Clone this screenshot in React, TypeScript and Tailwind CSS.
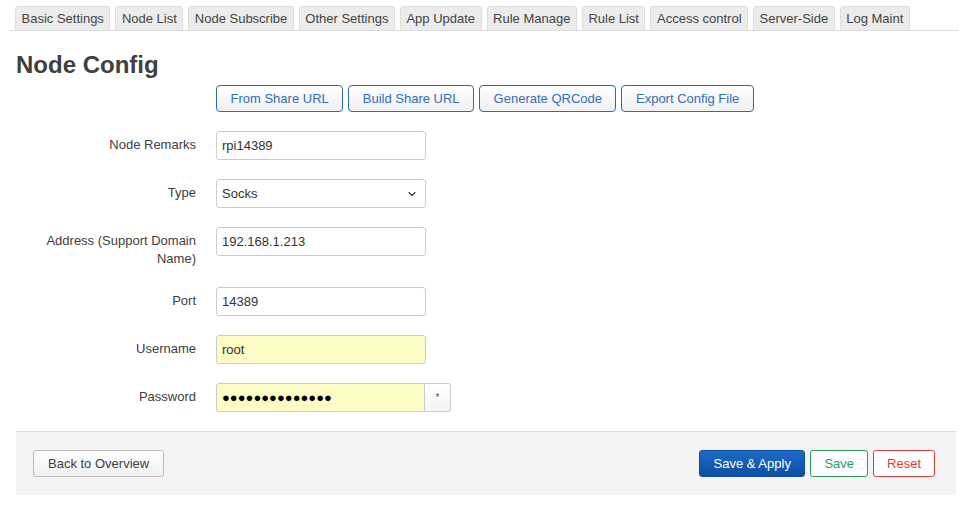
import { ChevronDown } from "lucide-react";

const TABS = [
  "Basic Settings",
  "Node List",
  "Node Subscribe",
  "Other Settings",
  "App Update",
  "Rule Manage",
  "Rule List",
  "Access control",
  "Server-Side",
  "Log Maint",
];

const ACTIONS = ["From Share URL", "Build Share URL", "Generate QRCode", "Export Config File"];

function Row({ label, children }: { label: React.ReactNode; children: React.ReactNode }) {
  return (
    <div className="mt-[19px] flex items-start">
      <div className="w-[180px] pt-[5px] text-right leading-[18px] text-[#404040]">{label}</div>
      <div className="ml-[20px]">{children}</div>
    </div>
  );
}

function TextInput({ value, yellow }: { value: string; yellow?: boolean }) {
  return (
    <div
      className={`flex h-[29px] w-[210px] items-center rounded-[3px] border border-[#ccc] px-[5px] text-[13px] text-[#333] ${
        yellow ? "bg-[#fdfbc6]" : "bg-white"
      }`}
    >
      {value}
    </div>
  );
}

export default function App() {
  return (
    <div
      className="min-h-[505px] bg-white text-[13px] text-[#404040]"
      style={{ fontFamily: '"Liberation Sans", Arial, sans-serif' }}
    >
      {/* tabs */}
      <div className="ml-[10px] flex gap-[5px] border-b border-[#ddd] pl-[5px] pt-[6px]">
        {TABS.map((t) => (
          <div
            key={t}
            className="-mb-px flex h-[25px] items-center rounded-t-[3px] border border-[#ddd] bg-[#ececec] px-[5.5px] text-[#444]"
          >
            {t}
          </div>
        ))}
      </div>

      <div className="pl-[16px] pr-[3px]">
        <h2 className="mt-[20px] text-[24px] leading-[28px] font-bold text-[#404040]">Node Config</h2>

        <div className="ml-[200px] mt-[6px] flex gap-[5px]">
          {ACTIONS.map((a) => (
            <button
              key={a}
              className="h-[27px] rounded-[4px] border border-[#2b6cb0] bg-gradient-to-b from-white to-[#f0f0f0] px-[13.5px] text-[13px] text-[#2f6fb4]"
            >
              {a}
            </button>
          ))}
        </div>

        <div>
          <Row label="Node Remarks">
            <TextInput value="rpi14389" />
          </Row>
          <Row label="Type">
            <div className="flex h-[29px] w-[210px] items-center justify-between rounded-[3px] border border-[#ccc] bg-white px-[5px] text-[13px] text-[#333]">
              <span>Socks</span>
              <ChevronDown size={12} strokeWidth={2.2} className="mr-[2px] text-[#333]" />
            </div>
          </Row>
          <Row label={<>Address (Support Domain<br />Name)</>}>
            <TextInput value="192.168.1.213" />
          </Row>
          <Row label="Port">
            <TextInput value="14389" />
          </Row>
          <Row label="Username">
            <TextInput value="root" yellow />
          </Row>
          <Row label="Password">
            <div className="flex h-[29px]">
              <div className="flex w-[209px] items-center rounded-l-[3px] border border-[#ccc] bg-[#fdfbc6] px-[5px] text-[13px] text-black">
                ●●●●●●●●●●●●●●
              </div>
              <div className="flex w-[26px] items-center justify-center rounded-r-[3px] border border-l-0 border-[#ccc] bg-gradient-to-b from-white to-[#f4f4f4] text-[10px] text-[#555]">
                *
              </div>
            </div>
          </Row>
        </div>

        <div className="mt-[19px] flex items-center justify-between border-t border-[#ddd] bg-[#f4f4f4] pb-[18px] pl-[17px] pr-[21px] pt-[18px]">
          <button className="h-[27px] rounded-[3px] border border-[#bbb] bg-gradient-to-b from-white to-[#f0f0f0] px-[14px] text-[13px] text-[#404040]">
            Back to Overview
          </button>
          <div className="flex gap-[5px]">
            <button className="h-[27px] rounded-[3px] border border-[#0b4d9f] bg-gradient-to-b from-[#1f6bc6] to-[#0b4fa3] px-[13.5px] text-[13px] text-white">
              Save &amp; Apply
            </button>
            <button className="h-[27px] rounded-[3px] border border-[#2f9a5a] bg-white px-[13px] text-[13px] text-[#2f9a5a]">
              Save
            </button>
            <button className="h-[27px] rounded-[3px] border border-[#d9413a] bg-white px-[13px] text-[13px] text-[#d9413a]">
              Reset
            </button>
          </div>
        </div>
      </div>
    </div>
  );
}
